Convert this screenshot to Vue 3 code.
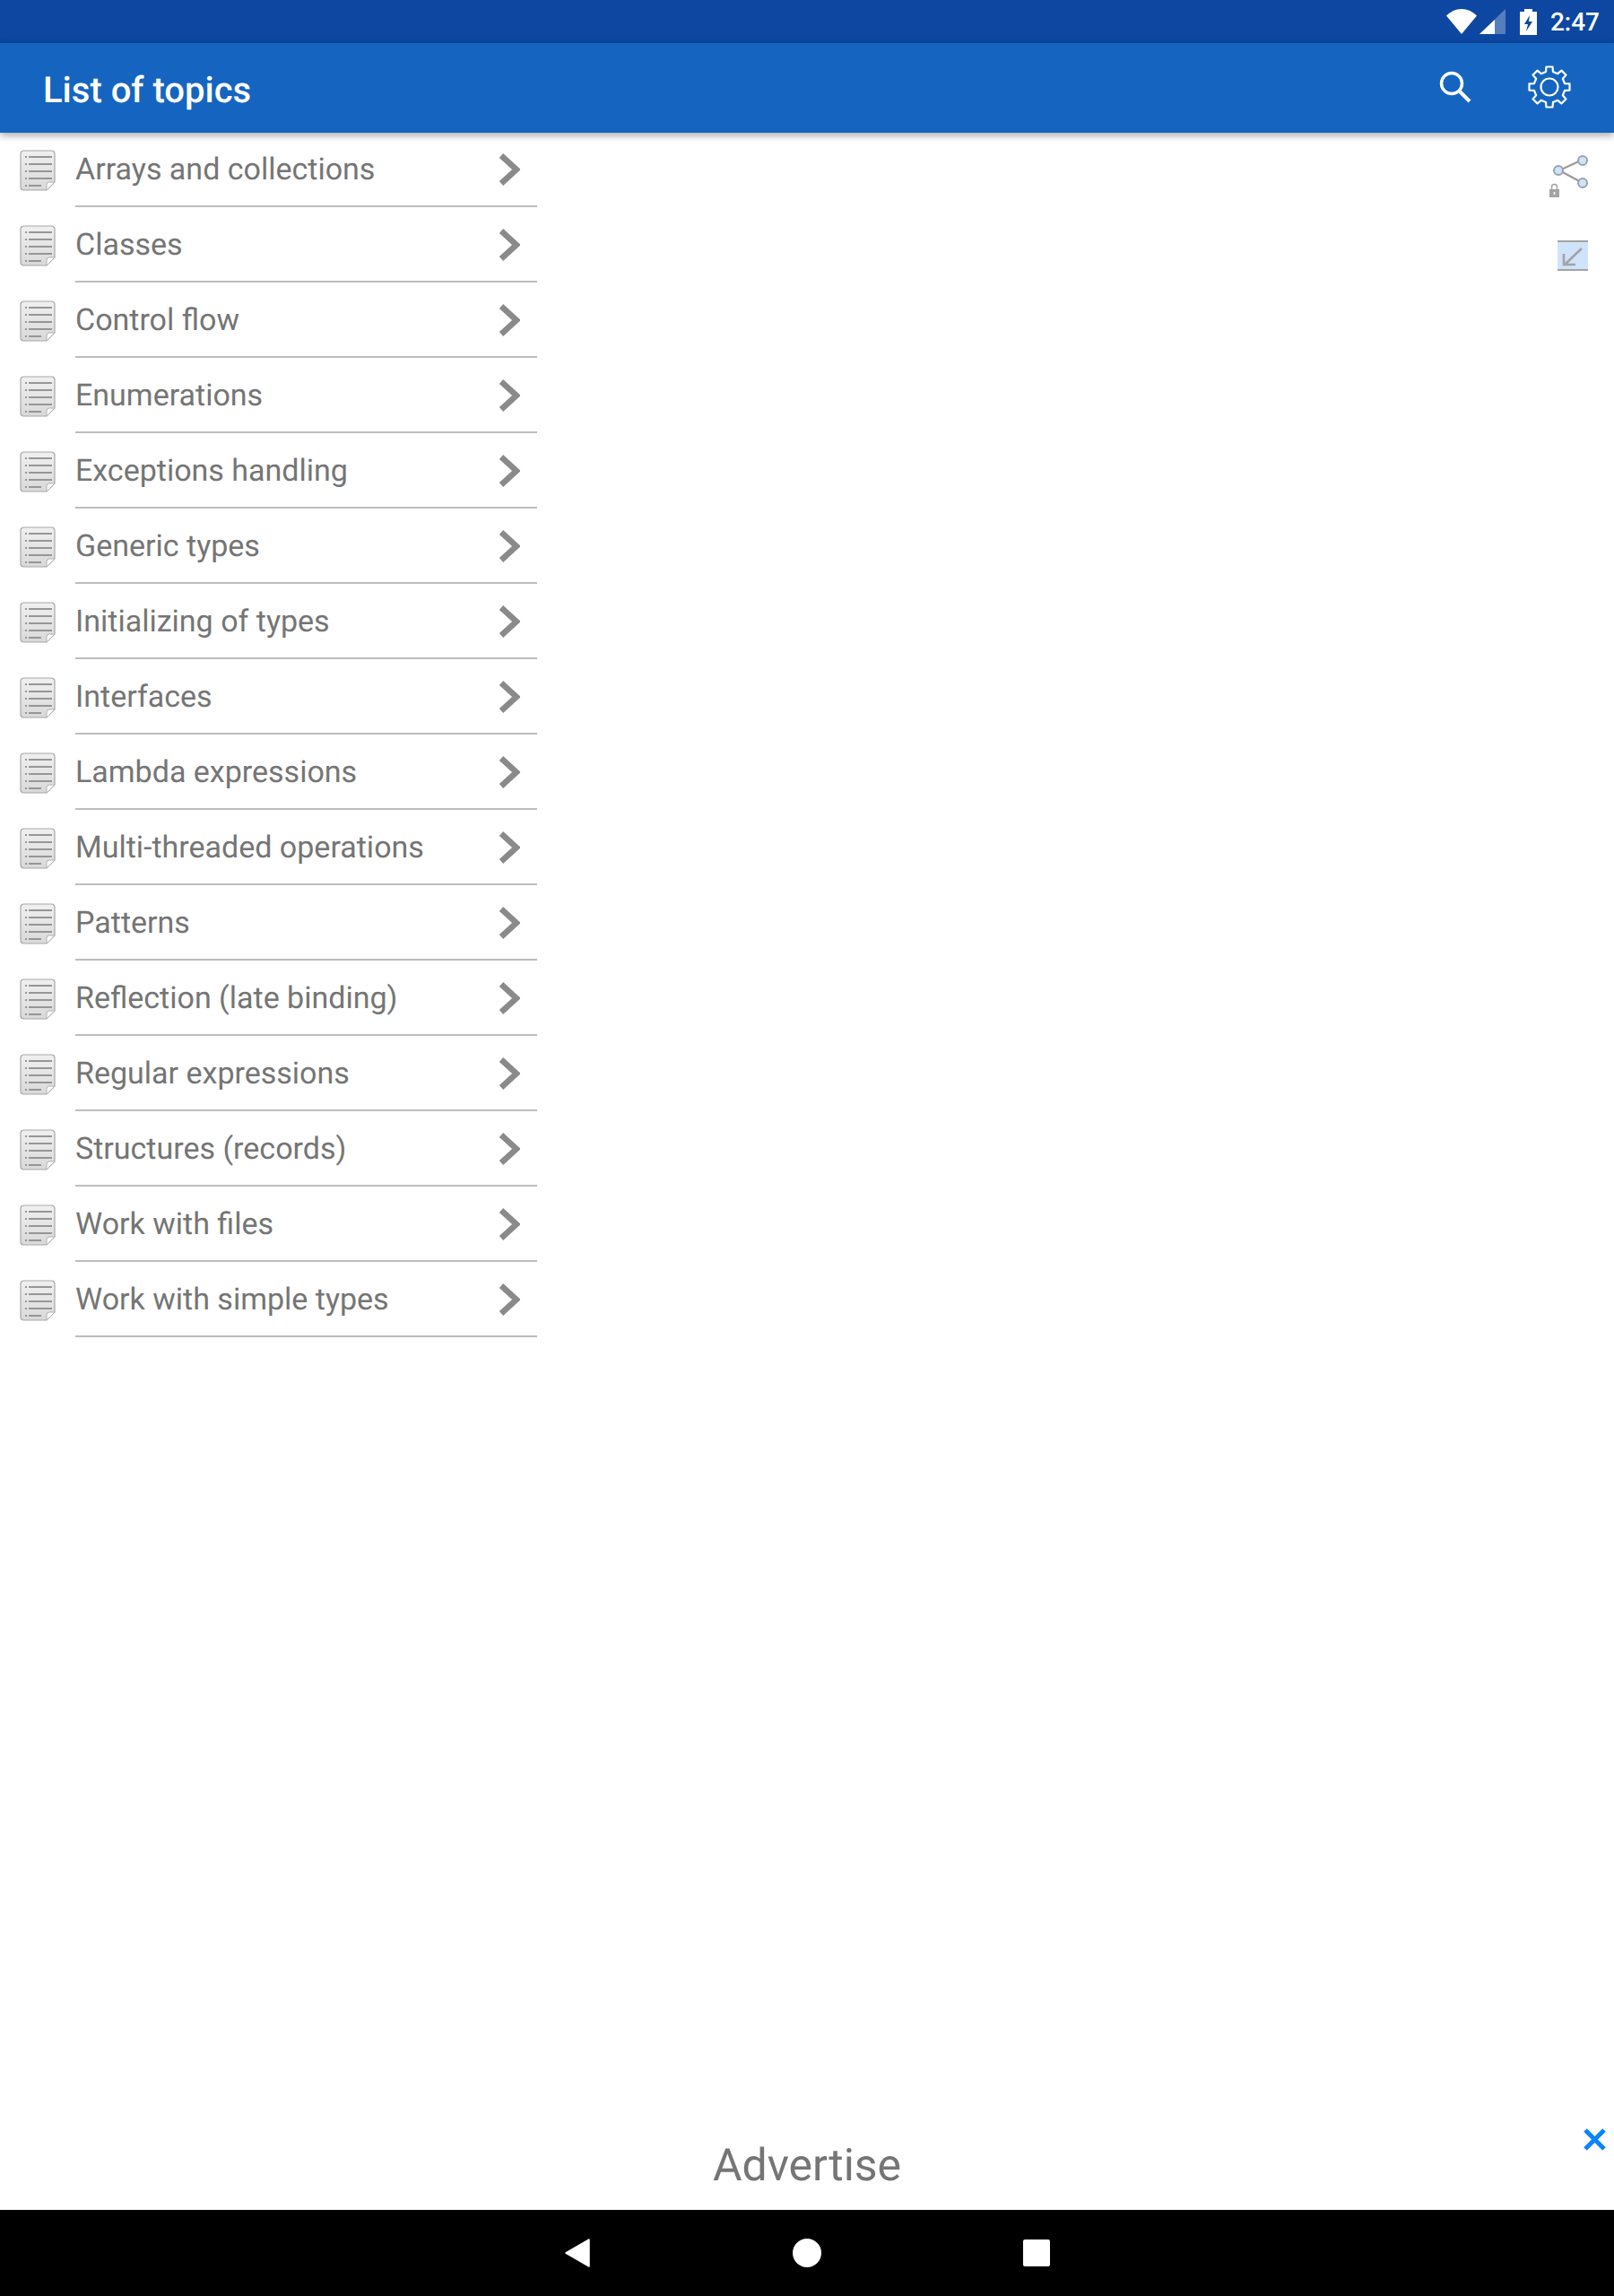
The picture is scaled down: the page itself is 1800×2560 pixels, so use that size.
<script setup>
const topics = [
  'Arrays and collections',
  'Classes',
  'Control flow',
  'Enumerations',
  'Exceptions handling',
  'Generic types',
  'Initializing of types',
  'Interfaces',
  'Lambda expressions',
  'Multi-threaded operations',
  'Patterns',
  'Reflection (late binding)',
  'Regular expressions',
  'Structures (records)',
  'Work with files',
  'Work with simple types',
]

// 8 rounded teeth around the centre of a 48 box
function gearPath() {
  const pts = []
  for (let i = 0; i < 8; i++) {
    const a = (i * 45 - 90) * Math.PI / 180
    const at = (r, d) => {
      const t = a + d * Math.PI / 180
      return (24 + r * Math.cos(t)).toFixed(2) + ' ' + (24 + r * Math.sin(t)).toFixed(2)
    }
    pts.push(at(17.5, -13), at(22.8, -9), at(22.8, 9), at(17.5, 13))
  }
  return 'M' + pts.join('L') + 'Z'
}
const gear = gearPath()
</script>

<template>
  <div class="screen">
    <div class="status-bar">
      <svg class="st-wifi" width="34" height="28" viewBox="0 0 34 28">
        <path d="M0 7.500C4.500 3 10.500 0 17 0s12.500 3 17 7.500L17 28z" fill="#fff" />
      </svg>
      <svg class="st-signal" width="29" height="28" viewBox="0 0 29 28">
        <path d="M29 0v28H0z" fill="#fff" fill-opacity="0.3" />
        <path d="M17 12v16H0z" fill="#fff" />
      </svg>
      <svg class="st-battery" width="19" height="29" viewBox="0 0 19 29">
        <path fill-rule="evenodd" fill="#fff" d="M5 0h9v3h5v26H0V3h5zM11 7L5 17h4l-2 8 7-11h-4z" />
      </svg>
      <span class="st-time">2:47</span>
    </div>

    <header class="app-bar">
      <h1 class="app-title">List of topics</h1>
      <svg class="ab-search" width="36" height="36" viewBox="0 0 36 36" fill="none" stroke="#fff">
        <circle cx="14" cy="14" r="11.500" stroke-width="3.500" />
        <path d="M22.500 22.500L34 34" stroke-width="4" />
      </svg>
      <svg class="ab-gear" width="48" height="48" viewBox="0 0 48 48" fill="none" stroke="#fff" stroke-width="2.200" stroke-linejoin="round">
        <path :d="gear" />
        <circle cx="24" cy="24" r="9.500" />
      </svg>
    </header>

    <main class="content">
      <ul class="topics">
        <li v-for="t in topics" :key="t" class="topic">
          <svg class="doc" width="40" height="46" viewBox="0 0 40 46">
            <defs>
              <linearGradient id="docFill" x1="0" y1="0" x2="0" y2="1">
                <stop offset="0" stop-color="#f0f0f0" />
                <stop offset="1" stop-color="#d9d9d9" />
              </linearGradient>
            </defs>
            <path d="M4.500 1h31A3.500 3.500 0 0 1 39 4.500V36l-9 9H4.500A3.500 3.500 0 0 1 1 41.500v-37A3.500 3.500 0 0 1 4.500 1z" fill="url(#docFill)" stroke="#a8a8a8" stroke-width="1.200" />
            <path d="M39 36h-6a3 3 0 0 0-3 3v6z" fill="#fff" stroke="#b0b0b0" stroke-width="1" />
            <g stroke="#969696" stroke-width="1.800">
              <path d="M10 8h26M10 16h26M10 24h26M10 32h26M10 40h14" />
              <path d="M6 8h2M6 16h2M6 24h2M6 32h2M6 40h2" />
            </g>
          </svg>
          <div class="topic-body">
            <span class="topic-name">{{ t }}</span>
            <svg class="chevron" width="24" height="36" viewBox="0 0 24 36" fill="none" stroke="#8a8a8a" stroke-width="6.500">
              <path d="M3 2.500L20 18 3 33.500" />
            </svg>
          </div>
        </li>
      </ul>

      <aside class="tools">
        <svg class="tool-share" width="46" height="48" viewBox="0 0 46 48">
          <path d="M11 17L37 5M11 17l26 14" stroke="#999" stroke-width="2" fill="none" />
          <circle cx="37" cy="6" r="5" fill="#cfe3fb" stroke="#9aa3ad" stroke-width="2" />
          <circle cx="10" cy="17" r="5" fill="#cfe3fb" stroke="#9aa3ad" stroke-width="2" />
          <circle cx="37" cy="31" r="5" fill="#cfe3fb" stroke="#9aa3ad" stroke-width="2" />
          <rect x="0" y="38" width="11" height="9" fill="#a3a3a3" />
          <path d="M2.500 38v-2.500a3 3 0 0 1 6 0V38" fill="none" stroke="#a3a3a3" stroke-width="1.500" />
          <path d="M5.500 41v3" stroke="#fff" stroke-width="1.500" />
        </svg>
        <svg class="tool-collapse" width="34" height="34" viewBox="0 0 34 34">
          <rect width="34" height="34" fill="#cfe3fb" />
          <path d="M0 1h34M0 33h34" stroke="#a3a3a3" stroke-width="2" />
          <path d="M27 9L8 27M7 15v12h13" fill="none" stroke="#a3a3a3" stroke-width="2.600" />
        </svg>
      </aside>
    </main>

    <footer class="advert">
      <span class="advert-text">Advertise</span>
      <svg class="advert-close" width="25" height="25" viewBox="0 0 25 25" stroke="#0a84ff" stroke-width="5">
        <path d="M2 2l21 21M23 2L2 23" />
      </svg>
    </footer>

    <nav class="nav-bar">
      <svg class="nav-back" width="28" height="32" viewBox="0 0 28 32">
        <path d="M27 1v30L1 16z" fill="#fff" stroke="#fff" stroke-width="1.500" stroke-linejoin="round" />
      </svg>
      <span class="nav-home" />
      <span class="nav-recent" />
    </nav>
  </div>
</template>

<style>
html, body { margin: 0; background: #fff; }
</style>

<style scoped>
.screen {
  width: 1800px;
  height: 2560px;
  display: flex;
  flex-direction: column;
  overflow: hidden;
  background: #fff;
  font-family: Roboto, "Liberation Sans", sans-serif;
  text-rendering: geometricPrecision;
}

.status-bar {
  height: 48px;
  flex: none;
  display: flex;
  align-items: center;
  padding-right: 16px;
  justify-content: flex-end;
  background: #0d47a1;
}
.st-wifi { margin-right: 3px; }
.st-signal { margin-right: 16px; }
.st-battery { margin-right: 15px; }
.st-time {
  color: #fff;
  font-size: 28px;
  font-weight: 500;
}

.app-bar {
  height: 100px;
  flex: none;
  position: relative;
  z-index: 2;
  display: flex;
  align-items: center;
  padding: 0 48px;
  background: #1565c0;
  box-shadow: 0 3px 8px rgba(0, 0, 0, 0.35);
}
.app-title {
  flex: 1;
  margin: 4px 0 0;
  color: #fff;
  font-size: 40px;
  font-weight: 500;
}
.ab-search { margin: -2px 63px 0 0; }
.ab-gear { margin-top: -2px; }

.content {
  flex: 1;
  display: flex;
  justify-content: space-between;
  min-height: 0;
}
.topics {
  width: 599px;
  margin: -1px 0 0;
  padding: 0;
  list-style: none;
}
.topic {
  height: 84px;
  display: flex;
  align-items: center;
}
.doc {
  flex: none;
  margin: 2px 22px 0;
}
.topic-body {
  flex: 1;
  height: 100%;
  box-sizing: border-box;
  border-bottom: 2px solid #bdbdbd;
  display: flex;
  align-items: center;
  justify-content: space-between;
  padding: 2px 19px 0 0;
}
.topic-name {
  margin-top: -1px;
  color: #757575;
  font-size: 34px;
}

.tools {
  width: 72px;
  padding-top: 25px;
  display: flex;
  flex-direction: column;
}
.tool-collapse { margin: 47px 0 0 9px; }

.advert {
  height: 100px;
  flex: none;
  position: relative;
  display: flex;
  align-items: flex-end;
  justify-content: center;
  box-sizing: border-box;
  padding-bottom: 20px;
}
.advert-text {
  color: #757575;
  font-size: 50px;
  line-height: 58px;
}
.advert-close {
  position: absolute;
  top: 9px;
  right: 9px;
}

.nav-bar {
  height: 96px;
  flex: none;
  display: flex;
  align-items: center;
  background: #000;
  padding-left: 630px;
}
.nav-back { margin-right: 226px; }
.nav-home {
  width: 32px;
  height: 32px;
  border-radius: 50%;
  background: #fff;
  margin-right: 225px;
}
.nav-recent {
  width: 30px;
  height: 30px;
  border-radius: 2px;
  background: #fff;
}
</style>
